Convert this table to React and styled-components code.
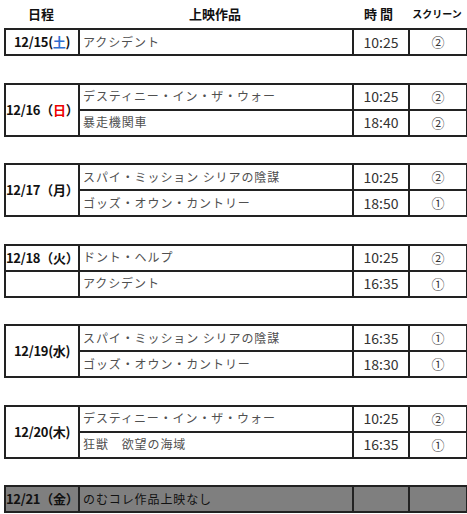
import React from "react";
import styled, { createGlobalStyle } from "styled-components";

const GlobalStyle = createGlobalStyle`
  body {
    margin: 0;
    background: #fff;
    font-family: "Noto Sans CJK JP", "Noto Sans", sans-serif;
  }
`;

const Page = styled.div`
  width: 463px;
  padding: 0 0 0 4px;
`;

const HeaderRow = styled.div`
  display: grid;
  grid-template-columns: 74px 274px 56px 58px;
  height: 28px;
  align-items: center;
  font-weight: bold;
  color: #111;
`;

const HeaderCell = styled.div`
  text-align: center;
  font-size: ${(p) => (p.$small ? "10px" : "13px")};
  letter-spacing: ${(p) => p.$spacing || "0"};
  line-height: 1.2;
`;

const Block = styled.table`
  border-collapse: collapse;
  table-layout: fixed;
  width: 462px;
  margin-bottom: 26.5px;
  background: ${(p) => (p.$closed ? "#7f7f7f" : "#fff")};

  &:last-child {
    margin-bottom: 0;
  }
`;

const Row = styled.tr`
  height: 26px;
`;

const Cell = styled.td`
  border: 2px solid #222;
  padding: 0;
  line-height: 1.2;
  vertical-align: middle;
`;

const DateCell = styled(Cell)`
  text-align: center;
  font-size: 13px;
  font-weight: bold;
  color: #111;
  white-space: nowrap;
  letter-spacing: -0.3px;
`;

const TitleCell = styled(Cell)`
  padding-left: 3px;
  font-size: 12px;
  letter-spacing: 0.9px;
  color: ${(p) => (p.$closed ? "#111" : "#505050")};
  white-space: nowrap;
`;

const TimeCell = styled(Cell)`
  text-align: center;
  font-size: 14px;
  color: #333;
`;

const ScreenCell = styled(Cell)`
  text-align: center;
  font-size: 13px;
  color: #333;
`;

const Weekday = styled.span`
  color: ${(p) => (p.$tone === "sat" ? "#2f6fd1" : p.$tone === "sun" ? "#e00" : "inherit")};
`;

const days = [
  {
    date: "12/15",
    open: "(",
    close: ")",
    wd: "土",
    tone: "sat",
    shows: [{ title: "アクシデント", time: "10:25", screen: "②" }],
  },
  {
    date: "12/16",
    open: "（",
    close: "）",
    wd: "日",
    tone: "sun",
    shows: [
      { title: "デスティニー・イン・ザ・ウォー", time: "10:25", screen: "②" },
      { title: "暴走機関車", time: "18:40", screen: "②" },
    ],
  },
  {
    date: "12/17",
    open: "（",
    close: "）",
    wd: "月",
    shows: [
      { title: "スパイ・ミッション シリアの陰謀", time: "10:25", screen: "②" },
      { title: "ゴッズ・オウン・カントリー", time: "18:50", screen: "①" },
    ],
  },
  {
    date: "12/18",
    open: "（",
    close: "）",
    wd: "火",
    split: true,
    shows: [
      { title: "ドント・ヘルプ", time: "10:25", screen: "②" },
      { title: "アクシデント", time: "16:35", screen: "①" },
    ],
  },
  {
    date: "12/19",
    open: "(",
    close: ")",
    wd: "水",
    shows: [
      { title: "スパイ・ミッション シリアの陰謀", time: "16:35", screen: "①" },
      { title: "ゴッズ・オウン・カントリー", time: "18:30", screen: "①" },
    ],
  },
  {
    date: "12/20",
    open: "(",
    close: ")",
    wd: "木",
    shows: [
      { title: "デスティニー・イン・ザ・ウォー", time: "10:25", screen: "②" },
      { title: "狂獣　欲望の海域", time: "16:35", screen: "①" },
    ],
  },
  {
    date: "12/21",
    open: "（",
    close: "）",
    wd: "金",
    closed: true,
    shows: [{ title: "のむコレ作品上映なし", time: "", screen: "" }],
  },
];

const DayBlock = ({ day }) => {
  const label = (
    <>
      {day.date}
      {day.open}
      <Weekday $tone={day.tone}>{day.wd}</Weekday>
      {day.close}
    </>
  );
  return (
    <Block $closed={day.closed}>
      <colgroup>
        <col style={{ width: 74 }} />
        <col style={{ width: 274 }} />
        <col style={{ width: 56 }} />
        <col style={{ width: 58 }} />
      </colgroup>
      <tbody>
        {day.shows.map((s, i) => (
          <Row key={i}>
            {i === 0 && (
              <DateCell rowSpan={day.split ? 1 : day.shows.length}>{label}</DateCell>
            )}
            {i > 0 && day.split && <DateCell />}
            <TitleCell $closed={day.closed}>{s.title}</TitleCell>
            <TimeCell>{s.time}</TimeCell>
            <ScreenCell>{s.screen}</ScreenCell>
          </Row>
        ))}
      </tbody>
    </Block>
  );
};

export default function App() {
  return (
    <Page>
      <GlobalStyle />
      <HeaderRow>
        <HeaderCell>日程</HeaderCell>
        <HeaderCell>上映作品</HeaderCell>
        <HeaderCell $spacing="3px">時間</HeaderCell>
        <HeaderCell $small>スクリーン</HeaderCell>
      </HeaderRow>
      {days.map((d) => (
        <DayBlock key={d.date} day={d} />
      ))}
    </Page>
  );
}
